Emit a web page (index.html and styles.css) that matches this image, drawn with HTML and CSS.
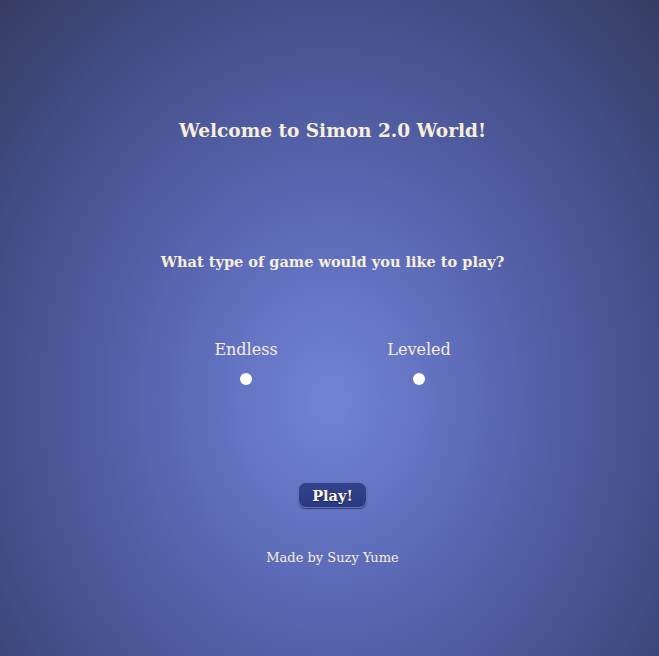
FILE: index.html
```html
<!DOCTYPE html>
<html>
<head>
<meta charset="utf-8">
<link rel="stylesheet" href="styles.css">
</head>
<body>
<main class="page">
  <h1 class="title">Welcome to Simon 2.0 World!</h1>
  <h2 class="question">What type of game would you like to play?</h2>
  <div class="options">
    <label class="option">
      <span class="option-label">Endless</span>
      <span class="dot"></span>
    </label>
    <label class="option">
      <span class="option-label">Leveled</span>
      <span class="dot"></span>
    </label>
  </div>
  <button class="play">Play!</button>
  <p class="footer">Made by Suzy Yume</p>
</main>
</body>
</html>
```
FILE: styles.css
```css
html, body {
  margin: 0;
  height: 100%;
}
body {
  background: radial-gradient(ellipse farthest-corner at 50% 61%, #7384d6 0%, #5a68b4 35%, #454f8b 70%, #363c62 100%);
  font-family: "DejaVu Serif", "Liberation Serif", serif;
  color: #f7eedc;
}
.page {
  display: flex;
  flex-direction: column;
  align-items: center;
  padding: 118px 0 0 6px;
}
.title {
  margin: 0;
  font-size: 18.5px;
  font-weight: bold;
  line-height: 26px;
}
.question {
  margin: 107px 0 0;
  font-size: 14.5px;
  font-weight: bold;
  line-height: 22px;
}
.options {
  display: flex;
  gap: 109px;
  margin-top: 66px;
}
.option {
  display: flex;
  flex-direction: column;
  align-items: center;
  width: 64px;
}
.option-label {
  font-size: 16px;
  line-height: 22px;
}
.dot {
  width: 12px;
  height: 12px;
  border-radius: 50%;
  background: #ffffff;
  margin-top: 12px;
}
.play {
  margin-top: 97px;
  width: 69px;
  height: 26px;
  border-radius: 8px;
  border: 1px solid #5f6fba;
  background: linear-gradient(#34428e, #2b3980);
  box-shadow: 0 1px 1px rgba(20, 25, 60, 0.6);
  color: #fbf6ea;
  font-family: "DejaVu Serif", serif;
  font-weight: bold;
  font-size: 14.5px;
  padding: 0;
  text-shadow: 0 1px 1px #1a2040;
}
.footer {
  margin: 41px 0 0;
  font-size: 13px;
  line-height: 18px;
}
```
